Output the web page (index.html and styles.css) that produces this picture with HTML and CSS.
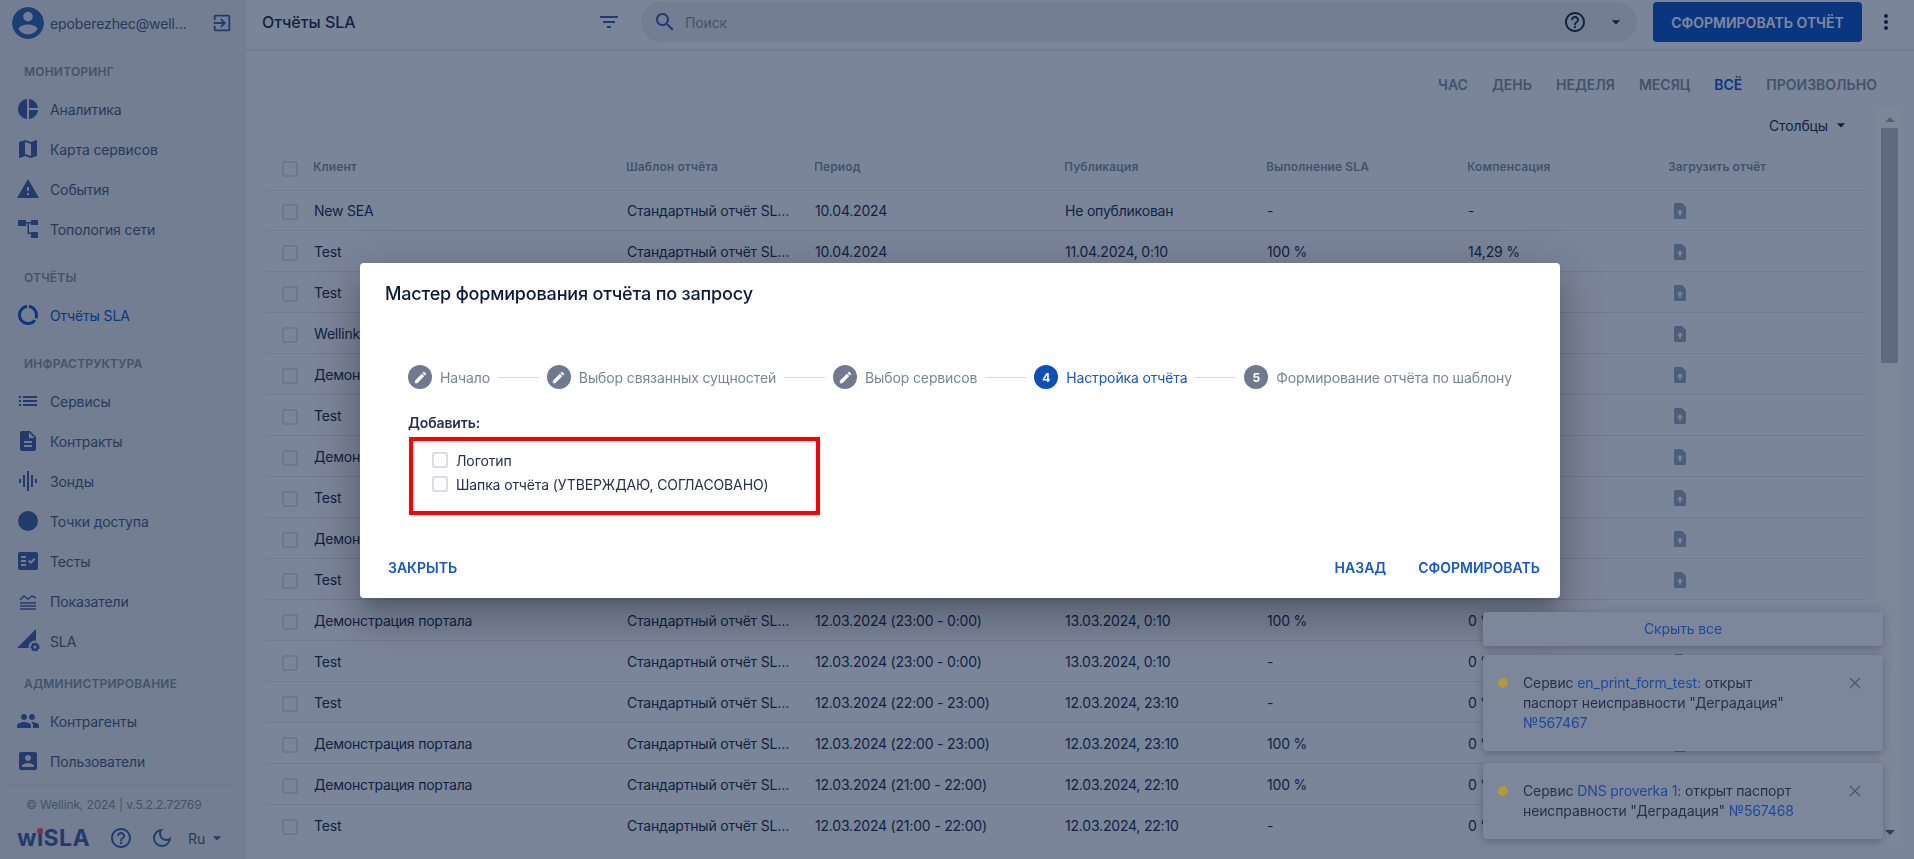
FILE: index.html
```html
<!DOCTYPE html>
<html lang="ru">
<head>
    <meta charset="UTF-8">
    <title>Отчёты SLA</title>
    <link rel="stylesheet" href="styles.css">
</head>
<body>
    <svg class="sprite" xmlns="http://www.w3.org/2000/svg">
        <symbol id="i-upload" viewBox="0 0 12 16"><path fill-rule="evenodd" d="M1.5 0H8l4 4v10.5a1.5 1.5 0 0 1-1.500 1.500h-9A1.500 1.500 0 0 1 0 14.500v-13A1.500 1.500 0 0 1 1.500 0zM6 6.300 2.700 9.600H5v2.900h2V9.600h2.300z"/></symbol>
        <symbol id="i-caret" viewBox="0 0 24 24"><path d="M7 10l5 5 5-5z"/></symbol>
        <symbol id="i-edit" viewBox="0 0 24 24"><path d="M3 17.250V21h3.750L17.810 9.940l-3.750-3.750L3 17.250zM20.710 7.040c.39-.39.39-1.020 0-1.410l-2.340-2.340c-.39-.39-1.020-.39-1.410 0l-1.830 1.830 3.750 3.750 1.830-1.830z"/></symbol>
        <symbol id="i-help" viewBox="0 0 24 24"><path d="M11 18h2v-2h-2v2zm1-16C6.480 2 2 6.480 2 12s4.480 10 10 10 10-4.480 10-10S17.520 2 12 2zm0 18c-4.410 0-8-3.590-8-8s3.590-8 8-8 8 3.590 8 8-3.590 8-8 8zm0-14c-2.210 0-4 1.790-4 4h2c0-1.100.9-2 2-2s2 .9 2 2c0 2-3 1.750-3 5h2c0-2.250 3-2.500 3-5 0-2.210-1.790-4-4-4z"/></symbol>
    </svg>

    <div class="app">
        <aside class="sidebar">
            <div class="user">
                <svg class="avatar" viewBox="2 2 20 20"><path d="M12 2C6.480 2 2 6.480 2 12s4.480 10 10 10 10-4.480 10-10S17.520 2 12 2zm0 3c1.660 0 3 1.340 3 3s-1.340 3-3 3-3-1.340-3-3 1.340-3 3-3zm0 14.200c-2.500 0-4.710-1.280-6-3.220.03-1.990 4-3.080 6-3.080 1.990 0 5.970 1.090 6 3.080-1.290 1.940-3.500 3.220-6 3.220z"/></svg>
                <span class="user-name">epoberezhec@well...</span>
                <svg class="logout" viewBox="0 0 24 24"><path d="M10.090 15.590L11.500 17l5-5-5-5-1.410 1.410L12.670 11H3v2h9.670l-2.580 2.590zM19 3H5c-1.110 0-2 .9-2 2v4h2V5h14v14H5v-4H3v4c0 1.100.89 2 2 2h14c1.100 0 2-.9 2-2V5c0-1.100-.9-2-2-2z"/></svg>
            </div>

            <nav class="nav">
                <div class="nav-title">Мониторинг</div>
                <a class="nav-item"><svg viewBox="0 0 24 24"><path d="M11 2v20c-5.070-.5-9-4.790-9-10s3.930-9.500 9-10zm2.030 0v8.990H22c-.47-4.740-4.240-8.520-8.970-8.990zm0 11.010V22c4.740-.47 8.500-4.250 8.970-8.990h-8.970z"/></svg>Аналитика</a>
                <a class="nav-item"><svg viewBox="0 0 24 24"><path d="M20.500 3l-.16.03L15 5.100 9 3 3.360 4.900c-.21.07-.36.25-.36.48V20.500c0 .28.22.5.5.5l.16-.03L9 18.900l6 2.100 5.640-1.900c.21-.07.36-.25.36-.48V3.500c0-.28-.22-.5-.5-.5zM15 19l-6-2.110V5l6 2.110V19z"/></svg>Карта сервисов</a>
                <a class="nav-item"><svg viewBox="0 0 24 24"><path d="M1 21h22L12 2 1 21zm12-3h-2v-2h2v2zm0-4h-2v-4h2v4z"/></svg>События</a>
                <a class="nav-item"><svg viewBox="0 0 24 24"><path d="M2 3h8v6H2zM15 3h7v5h-7zM15 15h7v6h-7zM10 5h5v1.500h-5zM11.500 5H13v12h-1.500zM11.500 15.500H15V17h-3.500z"/></svg>Топология сети</a>

                <div class="nav-title nav-gap">Отчёты</div>
                <a class="nav-item active"><svg viewBox="0 0 24 24"><path d="M13 2.050v3.030c3.390.49 6 3.390 6 6.920 0 .9-.18 1.750-.48 2.540l2.600 1.530c.56-1.240.88-2.620.88-4.070 0-5.180-3.950-9.450-9-9.950zM12 19c-3.870 0-7-3.130-7-7 0-3.530 2.610-6.430 6-6.920V2.050c-5.060.5-9 4.760-9 9.950 0 5.520 4.470 10 9.990 10 3.310 0 6.240-1.610 8.060-4.090l-2.600-1.530C16.170 17.980 14.210 19 12 19z"/></svg>Отчёты SLA</a>

                <div class="nav-title nav-gap">Инфраструктура</div>
                <a class="nav-item"><svg viewBox="0 0 24 24"><path d="M3 13h2v-2H3v2zm0 4h2v-2H3v2zm0-8h2V7H3v2zm4 4h14v-2H7v2zm0 4h14v-2H7v2zM7 7v2h14V7H7z"/></svg>Сервисы</a>
                <a class="nav-item"><svg viewBox="0 0 24 24"><path d="M14 2H6c-1.100 0-1.990.9-1.990 2L4 20c0 1.100.89 2 1.990 2H18c1.100 0 2-.9 2-2V8l-6-6zm2 16H8v-2h8v2zm0-4H8v-2h8v2zm-3-5V3.500L18.500 9H13z"/></svg>Контракты</a>
                <a class="nav-item"><svg viewBox="0 0 24 24"><path d="M7 18h2V6H7v12zm4 4h2V2h-2v20zm-8-8h2v-4H3v4zm12 4h2V6h-2v12zm4-8v4h2v-4h-2z"/></svg>Зонды</a>
                <a class="nav-item"><svg viewBox="0 0 24 24"><circle cx="12" cy="12" r="10"/></svg>Точки доступа</a>
                <a class="nav-item"><svg viewBox="0 0 24 24"><path d="M20 3H4c-1.100 0-2 .9-2 2v14c0 1.100.9 2 2 2h16c1.100 0 2-.9 2-2V5c0-1.100-.9-2-2-2zM10 17H5v-2h5v2zm0-4H5v-2h5v2zm0-4H5V7h5v2zm4.820 6L12 12.160l1.410-1.410 1.410 1.420L17.990 9l1.420 1.420L14.820 15z"/></svg>Тесты</a>
                <a class="nav-item"><svg viewBox="0 0 24 24"><path class="line-icon" d="M4 11l4-4 4 3 4-3 4 2M4 14h16M4 17h16M4 20h16"/></svg>Показатели</a>
                <a class="nav-item"><svg viewBox="0 0 24 24"><path d="M1 19L20 0v12l-7 7z"/><circle class="gear-gap" cx="19" cy="18" r="6.500"/><circle class="gear" cx="19" cy="18" r="3.800"/><circle class="gear-gap" cx="19" cy="18" r="1.500"/></svg>SLA</a>

                <div class="nav-title nav-gap-small">Администрирование</div>
                <a class="nav-item"><svg viewBox="0 0 24 24"><path d="M16 11c1.660 0 2.990-1.340 2.990-3S17.660 5 16 5c-1.660 0-3 1.340-3 3s1.340 3 3 3zm-8 0c1.660 0 2.990-1.340 2.990-3S9.660 5 8 5C6.340 5 5 6.340 5 8s1.340 3 3 3zm0 2c-2.330 0-7 1.170-7 3.500V19h14v-2.500c0-2.330-4.670-3.500-7-3.500zm8 0c-.29 0-.62.02-.97.05 1.160.84 1.970 1.970 1.970 3.450V19h6v-2.500c0-2.330-4.670-3.500-7-3.500z"/></svg>Контрагенты</a>
                <a class="nav-item"><svg viewBox="0 0 24 24"><path d="M3 5v14c0 1.100.89 2 2 2h14c1.100 0 2-.9 2-2V5c0-1.100-.9-2-2-2H5c-1.110 0-2 .9-2 2zm12 4c0 1.660-1.340 3-3 3s-3-1.340-3-3 1.340-3 3-3 3 1.340 3 3zm-9 8c0-2 4-3.100 6-3.100s6 1.100 6 3.100v1H6v-1z"/></svg>Пользователи</a>
            </nav>

            <div class="side-footer">
                <div class="copyright">© Wellink, 2024 | v.5.2.2.72769</div>
                <div class="side-tools">
                    <span class="logo">wiSLA</span>
                    <svg class="tool-help"><use href="#i-help"/></svg>
                    <svg class="tool-moon" viewBox="0 0 24 24"><path d="M9.370 5.510A7.350 7.350 0 0 0 9.100 7.500c0 4.080 3.320 7.400 7.400 7.400.68 0 1.350-.09 1.990-.27A7.014 7.014 0 0 1 12 19c-3.860 0-7-3.140-7-7 0-2.930 1.810-5.450 4.370-6.490zM12 3a9 9 0 1 0 9 9c0-.46-.04-.92-.1-1.360a5.389 5.389 0 0 1-4.400 2.260 5.403 5.403 0 0 1-3.140-9.800c-.44-.06-.9-.1-1.360-.1z"/></svg>
                    <span class="lang">Ru</span>
                    <svg class="caret"><use href="#i-caret"/></svg>
                </div>
            </div>
        </aside>

        <div class="content">
            <header class="topbar">
                <h1 class="page-title">Отчёты SLA</h1>
                <svg class="filter-icon" viewBox="0 0 24 24"><path d="M10 18h4v-2h-4v2zM3 6v2h18V6H3zm3 7h12v-2H6v2z"/></svg>
                <div class="search">
                    <svg class="search-icon" viewBox="0 0 24 24"><path d="M15.500 14h-.79l-.28-.27C15.410 12.590 16 11.110 16 9.500 16 5.910 13.090 3 9.500 3S3 5.910 3 9.500 5.910 16 9.500 16c1.610 0 3.090-.59 4.230-1.570l.27.28v.79l5 4.990L20.490 19l-4.990-5zm-6 0C7.010 14 5 11.990 5 9.500S7.010 5 9.500 5 14 7.010 14 9.500 11.990 14 9.500 14z"/></svg>
                    <span class="search-text">Поиск</span>
                    <svg class="search-help"><use href="#i-help"/></svg>
                    <svg class="search-caret"><use href="#i-caret"/></svg>
                </div>
                <button class="primary-btn">Сформировать отчёт</button>
                <svg class="more-icon" viewBox="0 0 24 24"><path d="M12 8c1.100 0 2-.9 2-2s-.9-2-2-2-2 .9-2 2 .9 2 2 2zm0 2c-1.100 0-2 .9-2 2s.9 2 2 2 2-.9 2-2-.9-2-2-2zm0 6c-1.100 0-2 .9-2 2s.9 2 2 2 2-.9 2-2-.9-2-2-2z"/></svg>
            </header>

            <div class="periods">
                <span>Час</span><span>День</span><span>Неделя</span><span>Месяц</span><span class="current">Всё</span><span>Произвольно</span>
            </div>

            <div class="scroll-area">
                <div class="table-wrap">
                    <div class="columns-row">Столбцы <svg class="caret"><use href="#i-caret"/></svg></div>
                    <table class="report-table">
                        <colgroup>
                            <col class="c-check"><col class="c-client"><col class="c-template"><col class="c-period"><col class="c-pub"><col class="c-sla"><col class="c-comp"><col class="c-upload">
                        </colgroup>
                        <thead>
                            <tr><th><i class="box"></i></th><th>Клиент</th><th>Шаблон отчёта</th><th>Период</th><th>Публикация</th><th>Выполнение SLA</th><th>Компенсация</th><th>Загрузить отчёт</th></tr>
                        </thead>
                        <tbody>
                            <tr><td><i class="box"></i></td><td>New SEA</td><td>Стандартный отчёт SLA по запросу</td><td>10.04.2024</td><td>Не опубликован</td><td>-</td><td>-</td><td><svg class="upload"><use href="#i-upload"/></svg></td></tr>
                            <tr><td><i class="box"></i></td><td>Test</td><td>Стандартный отчёт SLA по запросу</td><td>10.04.2024</td><td>11.04.2024, 0:10</td><td>100 %</td><td>14,29 %</td><td><svg class="upload"><use href="#i-upload"/></svg></td></tr>
                            <tr><td><i class="box"></i></td><td>Test</td><td></td><td></td><td></td><td></td><td></td><td><svg class="upload"><use href="#i-upload"/></svg></td></tr>
                            <tr><td><i class="box"></i></td><td>Wellink</td><td></td><td></td><td></td><td></td><td></td><td><svg class="upload"><use href="#i-upload"/></svg></td></tr>
                            <tr><td><i class="box"></i></td><td>Демонстрация портала</td><td></td><td></td><td></td><td></td><td></td><td><svg class="upload"><use href="#i-upload"/></svg></td></tr>
                            <tr><td><i class="box"></i></td><td>Test</td><td></td><td></td><td></td><td></td><td></td><td><svg class="upload"><use href="#i-upload"/></svg></td></tr>
                            <tr><td><i class="box"></i></td><td>Демонстрация портала</td><td></td><td></td><td></td><td></td><td></td><td><svg class="upload"><use href="#i-upload"/></svg></td></tr>
                            <tr><td><i class="box"></i></td><td>Test</td><td></td><td></td><td></td><td></td><td></td><td><svg class="upload"><use href="#i-upload"/></svg></td></tr>
                            <tr><td><i class="box"></i></td><td>Демонстрация портала</td><td></td><td></td><td></td><td></td><td></td><td><svg class="upload"><use href="#i-upload"/></svg></td></tr>
                            <tr><td><i class="box"></i></td><td>Test</td><td></td><td></td><td></td><td></td><td></td><td><svg class="upload"><use href="#i-upload"/></svg></td></tr>
                            <tr><td><i class="box"></i></td><td>Демонстрация портала</td><td>Стандартный отчёт SLA по запросу</td><td>12.03.2024 (23:00 - 0:00)</td><td>13.03.2024, 0:10</td><td>100 %</td><td>0 %</td><td><svg class="upload"><use href="#i-upload"/></svg></td></tr>
                            <tr><td><i class="box"></i></td><td>Test</td><td>Стандартный отчёт SLA по запросу</td><td>12.03.2024 (23:00 - 0:00)</td><td>13.03.2024, 0:10</td><td>-</td><td>0 %</td><td><svg class="upload"><use href="#i-upload"/></svg></td></tr>
                            <tr><td><i class="box"></i></td><td>Test</td><td>Стандартный отчёт SLA по запросу</td><td>12.03.2024 (22:00 - 23:00)</td><td>12.03.2024, 23:10</td><td>-</td><td>0 %</td><td><svg class="upload"><use href="#i-upload"/></svg></td></tr>
                            <tr><td><i class="box"></i></td><td>Демонстрация портала</td><td>Стандартный отчёт SLA по запросу</td><td>12.03.2024 (22:00 - 23:00)</td><td>12.03.2024, 23:10</td><td>100 %</td><td>0 %</td><td><svg class="upload"><use href="#i-upload"/></svg></td></tr>
                            <tr><td><i class="box"></i></td><td>Демонстрация портала</td><td>Стандартный отчёт SLA по запросу</td><td>12.03.2024 (21:00 - 22:00)</td><td>12.03.2024, 22:10</td><td>100 %</td><td>0 %</td><td><svg class="upload"><use href="#i-upload"/></svg></td></tr>
                            <tr><td><i class="box"></i></td><td>Test</td><td>Стандартный отчёт SLA по запросу</td><td>12.03.2024 (21:00 - 22:00)</td><td>12.03.2024, 22:10</td><td>-</td><td>0 %</td><td><svg class="upload"><use href="#i-upload"/></svg></td></tr>
                        </tbody>
                    </table>
                </div>
                <div class="scrollbar">
                    <span class="scroll-arrow up"></span>
                    <span class="scroll-thumb"></span>
                    <span class="scroll-arrow down"></span>
                </div>
            </div>
        </div>
    </div>

    <div class="overlay"></div>

    <!-- Report wizard -->
    <div class="modal">
        <h2 class="modal-title">Мастер формирования отчёта по запросу</h2>
        <div class="stepper">
            <div class="step"><span class="step-icon"><svg><use href="#i-edit"/></svg></span>Начало</div>
            <span class="step-line"></span>
            <div class="step"><span class="step-icon"><svg><use href="#i-edit"/></svg></span>Выбор связанных сущностей</div>
            <span class="step-line"></span>
            <div class="step"><span class="step-icon"><svg><use href="#i-edit"/></svg></span>Выбор сервисов</div>
            <span class="step-line"></span>
            <div class="step step-active"><span class="step-icon">4</span>Настройка отчёта</div>
            <span class="step-line"></span>
            <div class="step"><span class="step-icon">5</span>Формирование отчёта по шаблону</div>
        </div>
        <div class="add-block">
            <div class="add-label">Добавить:</div>
            <div class="marked-box">
                <label class="check-row"><i class="box box-light"></i>Логотип</label>
                <label class="check-row"><i class="box box-light"></i>Шапка отчёта (УТВЕРЖДАЮ, СОГЛАСОВАНО)</label>
            </div>
        </div>
        <div class="modal-footer">
            <button class="text-btn">Закрыть</button>
            <div class="modal-footer-right">
                <button class="text-btn">Назад</button>
                <button class="text-btn">Сформировать</button>
            </div>
        </div>
    </div>

    <!-- Notifications -->
    <div class="toasts">
        <div class="toast toast-hide">Скрыть все</div>
        <div class="toast toast-tall">
            <span class="toast-dot"></span>
            <p>Сервис <a>en_print_form_test:</a> открыт паспорт неисправности "Деградация" <a>№567467</a></p>
            <svg class="toast-close" viewBox="0 0 12 12"><path d="M1 1l10 10M11 1L1 11"/></svg>
        </div>
        <div class="toast">
            <span class="toast-dot"></span>
            <p>Сервис <a>DNS proverka 1:</a> открыт паспорт неисправности "Деградация" <a>№567468</a></p>
            <svg class="toast-close" viewBox="0 0 12 12"><path d="M1 1l10 10M11 1L1 11"/></svg>
        </div>
    </div>
</body>
</html>
```

FILE: styles.css
```css
* {
    box-sizing: border-box;
}

body {
    margin: 0;
    height: 100vh;
    overflow: hidden;
    font-family: Inter, "Noto Sans", sans-serif;
    font-size: 14px;
    letter-spacing: -0.12px;
    color: #26304d;
    background: #f4f7fb;
}

.sprite {
    display: none;
}

.app {
    display: flex;
    height: 100vh;
}

/* Sidebar */
.sidebar {
    width: 246px;
    flex-shrink: 0;
    display: flex;
    flex-direction: column;
    background: #e6e9ed;
}

.user {
    display: flex;
    align-items: center;
    height: 46px;
    padding: 0 13px 0 12px;
}

.avatar {
    width: 32px;
    height: 32px;
    fill: #3669ae;
    background: #dfe6f0;
    border-radius: 50%;
}

.user-name {
    flex: 1;
    margin-left: 6px;
    color: #525e7e;
}

.logout {
    width: 22px;
    height: 22px;
    fill: #46639e;
}

.nav {
    margin-top: 14px;
}

.nav-title {
    height: 24px;
    line-height: 24px;
    margin-bottom: 5px;
    padding-left: 24px;
    font-size: 12px;
    font-weight: 600;
    text-transform: uppercase;
    color: #88919f;
    letter-spacing: 0.2px;
}

.nav-gap {
    margin-top: 17px;
}

.nav-gap-small {
    margin-top: 11px;
}

.nav-item {
    display: flex;
    align-items: center;
    gap: 10px;
    height: 40px;
    padding-left: 16px;
    color: #525e7e;
}

.nav-item svg {
    width: 24px;
    height: 24px;
    fill: #46639e;
}

.nav-item.active {
    color: #1459c7;
}

.nav-item.active svg {
    fill: #1459c7;
}

.line-icon {
    fill: none;
    stroke: #46639e;
    stroke-width: 1.4;
}

.gear-gap {
    fill: #e6e9ed;
}

.gear {
    fill: #46639e;
    stroke: #46639e;
    stroke-width: 1.5;
    stroke-dasharray: 2 1.5;
}

.side-footer {
    margin: 4px 8px 0;
    border-top: 1px solid #d9dde3;
}

.copyright {
    padding: 9px 0 0 18px;
    line-height: 20px;
    font-size: 12px;
    color: #88919f;
}

.side-tools {
    display: flex;
    align-items: center;
    height: 24px;
    margin-top: 11px;
    padding-left: 9px;
}

.logo {
    position: relative;
    width: 70px;
    line-height: 24px;
    font-size: 23px;
    font-weight: 700;
    letter-spacing: 0.4px;
    color: #46639e;
}

/* red dot over the i of the logo */
.logo::after {
    content: "";
    position: absolute;
    top: 2px;
    left: 20px;
    width: 6px;
    height: 6px;
    border-radius: 50%;
    background: #ff4a5a;
}

.tool-help {
    width: 24px;
    height: 24px;
    margin-left: 22px;
    fill: #46639e;
}

.tool-moon {
    width: 24px;
    height: 24px;
    margin-left: 17px;
    fill: #46639e;
}

.lang {
    margin-left: 14px;
    color: #525e7e;
}

.caret {
    width: 20px;
    height: 20px;
    fill: #26304d;
}

.side-tools .caret {
    margin-left: 2px;
    fill: #46639e;
}

/* Top bar */
.content {
    flex: 1;
    min-width: 0;
    display: flex;
    flex-direction: column;
}

.topbar {
    display: flex;
    align-items: center;
    height: 51px;
    padding: 0 16px 5px 16px;
    border-bottom: 2px solid #dce2ea;
}

.page-title {
    width: 335px;
    margin: 0;
    font-size: 16px;
    font-weight: 500;
    letter-spacing: 0;
    color: #26304d;
}

.filter-icon {
    width: 24px;
    height: 24px;
    flex-shrink: 0;
    fill: #46639e;
}

.search {
    display: flex;
    align-items: center;
    width: 996px;
    height: 40px;
    margin-left: 20px;
    padding-left: 12px;
    border-radius: 20px;
    background: #e6e9ed;
}

.search-icon {
    width: 24px;
    height: 24px;
    fill: #46639e;
}

.search-text {
    flex: 1;
    margin-left: 8px;
    color: #88919f;
}

.search-help {
    width: 24px;
    height: 24px;
    fill: #26304d;
}

.search-caret {
    width: 20px;
    height: 20px;
    margin: 0 11px 0 19px;
    fill: #26304d;
}

.primary-btn {
    width: 209px;
    height: 40px;
    flex-shrink: 0;
    margin-left: 16px;
    border: 0;
    border-radius: 4px;
    background: #1459c7;
    color: #fff;
    font-family: inherit;
    font-size: 14px;
    font-weight: 600;
    text-transform: uppercase;
}

.more-icon {
    width: 24px;
    height: 24px;
    flex-shrink: 0;
    margin-left: 12px;
    fill: #26304d;
}

/* Period tabs */
.periods {
    display: flex;
    justify-content: flex-end;
    gap: 24px;
    height: 56px;
    padding: 24px 37px 0 0;
    line-height: 20px;
    font-weight: 600;
    letter-spacing: 0;
    text-transform: uppercase;
    color: #88919f;
}

.periods .current {
    color: #1459c7;
}

/* Table */
.scroll-area {
    flex: 1;
    min-height: 0;
    display: flex;
    margin: 0 14px 14px 0;
    overflow: hidden;
}

.table-wrap {
    flex: 1;
    min-width: 0;
    padding: 8px 15px 0 20px;
}

.columns-row {
    display: flex;
    justify-content: flex-end;
    align-items: center;
    gap: 3px;
    height: 20px;
    margin-bottom: 9px;
    padding-right: 13px;
    color: #26304d;
}

.report-table {
    width: 1598px;
    table-layout: fixed;
    border-collapse: separate;
    border-spacing: 0;
}

.c-check { width: 48px; }
.c-client { width: 313px; }
.c-template { width: 188px; }
.c-period { width: 250px; }
.c-pub { width: 202px; }
.c-sla { width: 201px; }
.c-comp { width: 201px; }
.c-upload { width: 195px; }

.report-table th,
.report-table td {
    padding: 0 24px 0 0;
    border-bottom: 1px solid #dce0e8;
    white-space: nowrap;
    overflow: hidden;
    text-overflow: ellipsis;
    text-align: left;
    font-weight: 400;
    letter-spacing: -0.2px;
}

.report-table th {
    height: 47px;
    padding-bottom: 2px;
    font-size: 12px;
    font-weight: 600;
    letter-spacing: 0.1px;
    text-indent: -1px;
    color: #88919f;
}

.report-table td {
    height: 41px;
}

.report-table tbody tr:first-child td {
    height: 40px;
}

.report-table th:first-child,
.report-table td:first-child {
    padding: 0 0 0 16px;
    text-indent: 0;
}

.box {
    display: block;
    width: 16px;
    height: 16px;
    margin-top: 3px;
    border: 2px solid #d9dde8;
    border-radius: 2px;
}

.upload {
    display: block;
    width: 12px;
    height: 16px;
    margin: 1px 0 0 5px;
    fill: #9aa7c1;
}

/* Fake scrollbar */
.scrollbar {
    position: relative;
    width: 21px;
    flex-shrink: 0;
    background: #fafbfd;
}

.scroll-thumb {
    display: block;
    width: 17px;
    height: 235px;
    margin: 21px 0 0 2px;
    background: #bec1c8;
}

.scroll-arrow {
    position: absolute;
    left: 6px;
    width: 0;
    height: 0;
    border-left: 5px solid transparent;
    border-right: 5px solid transparent;
}

.scroll-arrow.up {
    top: 10px;
    border-bottom: 5px solid #a5abb8;
}

.scroll-arrow.down {
    bottom: 10px;
    border-top: 5px solid #5e6a86;
}

/* Overlay and modal */
.overlay {
    position: fixed;
    inset: 0;
    background: rgba(0, 19, 55, 0.5);
}

.modal {
    position: fixed;
    top: 263px;
    left: 360px;
    width: 1200px;
    height: 335px;
    padding-top: 19px;
    border-radius: 4px;
    background: #fff;
    box-shadow: 0 11px 15px -7px rgba(0, 0, 0, 0.2), 0 24px 38px 3px rgba(0, 0, 0, 0.14), 0 9px 46px 8px rgba(0, 0, 0, 0.12);
}

.modal-title {
    margin: 0;
    padding-left: 25px;
    line-height: 24px;
    font-size: 18px;
    font-weight: 500;
    letter-spacing: -0.16px;
    color: #0a1a3c;
}

.stepper {
    display: flex;
    align-items: center;
    margin: 59px 48px 0;
}

.step {
    display: flex;
    align-items: center;
    gap: 8px;
    white-space: nowrap;
    color: #7a8499;
}

.step-icon {
    display: flex;
    align-items: center;
    justify-content: center;
    width: 24px;
    height: 24px;
    border-radius: 50%;
    background: #6f7a90;
    color: #fff;
    font-size: 12px;
    font-weight: 700;
}

.step-icon svg {
    width: 15px;
    height: 15px;
    fill: #fff;
}

.step-active {
    color: #1459c7;
}

.step-active .step-icon {
    background: #0f50b8;
}

.step-line {
    flex: 1;
    height: 1px;
    margin: 0 8px;
    background: #d5d9e0;
}

.add-block {
    margin: 24px 0 0 48px;
}

.add-label {
    line-height: 20px;
    font-weight: 600;
    color: #26304d;
}

.marked-box {
    width: 411px;
    height: 78px;
    margin: 4px 0 0 1px;
    padding: 7px 0 0 19px;
    border: 4px solid #ff0000;
}

.check-row {
    display: flex;
    align-items: center;
    gap: 8px;
    height: 24px;
    color: #26304d;
}

.box-light {
    margin-top: 0;
}

.modal-footer {
    display: flex;
    justify-content: space-between;
    margin-top: 42px;
    padding: 0 20px 0 28px;
}

.modal-footer-right {
    display: flex;
    gap: 32px;
}

.text-btn {
    height: 20px;
    padding: 0;
    border: 0;
    background: none;
    color: #1459c7;
    font-family: inherit;
    font-size: 14px;
    font-weight: 600;
    text-transform: uppercase;
}

/* Toast stack sits above the overlay */
.toasts {
    position: fixed;
    top: 612px;
    left: 1483px;
    width: 400px;
    display: flex;
    flex-direction: column;
    gap: 12px;
}

.toast {
    display: flex;
    align-items: flex-start;
    height: 76px;
    padding: 18px 22px 0 15px;
    border-radius: 4px;
    background: #7c879b;
    box-shadow: 0 2px 8px rgba(0, 0, 30, 0.25);
    color: #26304d;
    line-height: 20px;
}

.toast-hide {
    display: block;
    height: 34px;
    margin-bottom: -3px;
    padding: 7px 0 0;
    text-align: center;
    color: #1c4a98;
}

.toast-tall {
    height: 96px;
}

.toast-dot {
    width: 10px;
    height: 10px;
    margin-top: 5px;
    flex-shrink: 0;
    border-radius: 50%;
    background: #b59a32;
}

.toast p {
    flex: 1;
    margin: 0 0 0 15px;
    padding-right: 50px;
}

.toast a {
    color: #1c4a98;
}

.toast-close {
    width: 12px;
    height: 12px;
    margin-top: 4px;
    flex-shrink: 0;
    fill: none;
    stroke: #4a5674;
    stroke-width: 1.2;
}
```
